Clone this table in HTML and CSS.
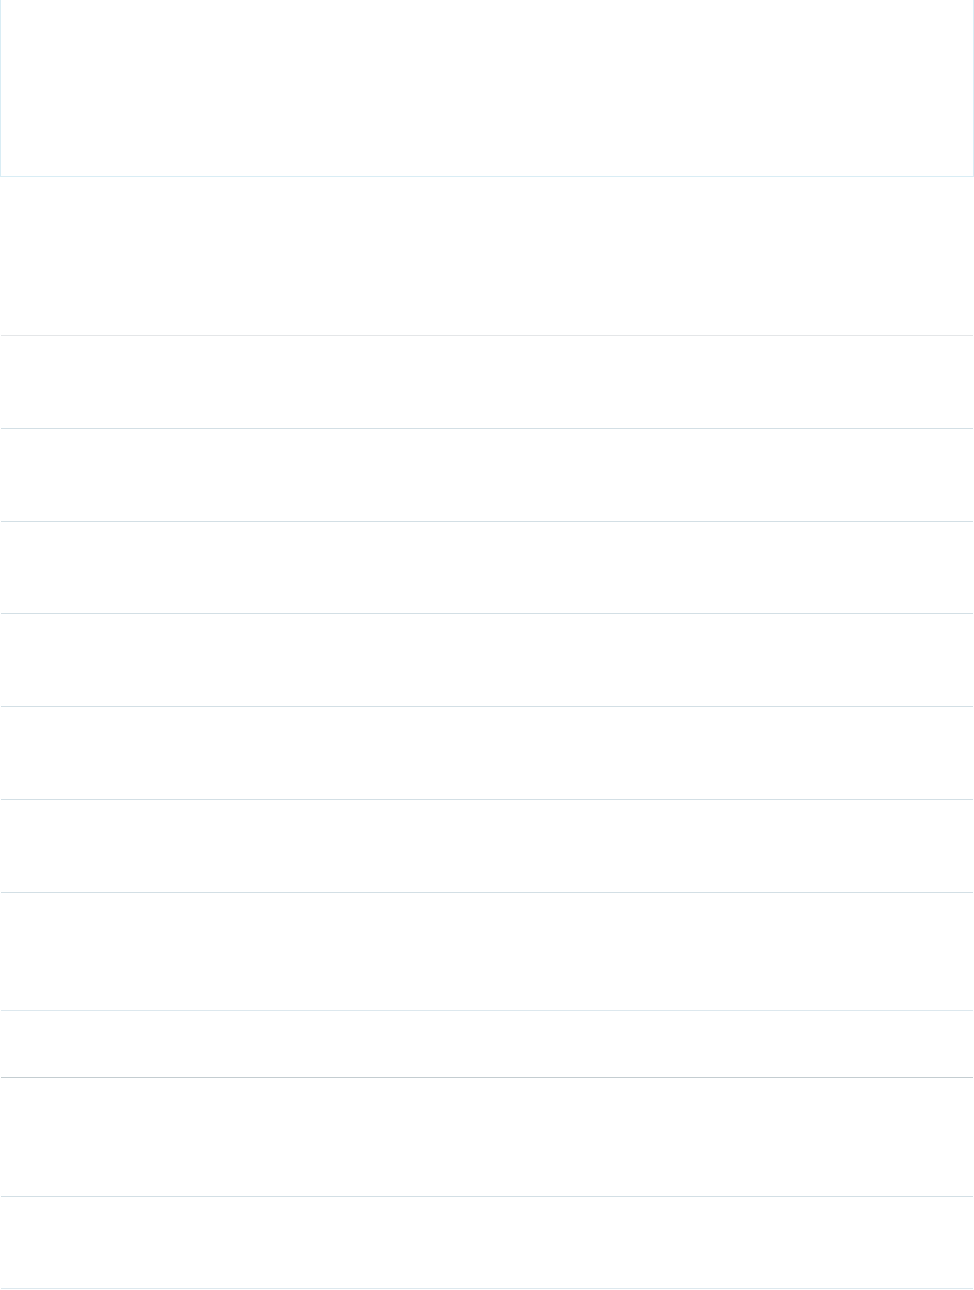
FILE: index.html
```html
<!DOCTYPE html>
<html>
<head>
    <meta charset="utf-8">
    <title>Records</title>
    <link rel="stylesheet" href="styles.css">
</head>
<body>
    <div class="banner"></div>
    <div class="content">
        <div class="head"></div>
        <div class="row"></div>
        <div class="row"></div>
        <div class="row short"></div>
        <div class="row"></div>
        <div class="row"></div>
        <div class="row"></div>
        <div class="row tall soft"></div>
        <div class="row small dark"></div>
        <div class="row taller"></div>
        <div class="row short soft"></div>
    </div>
</body>
</html>
```

FILE: styles.css
```css
html,
body {
    background: #fff;
    padding: 0;
    border: 0;
    margin: 0;
    font-family: "Liberation Sans", Arial, sans-serif;
}

.banner {
    height: 176px;
    border: 1px solid #d9edf5;
    border-top: 0;
}

.content {
    padding: 0 1px;
}

.head {
    height: 158px;
    border-bottom: 1px solid #e4e6e8;
}

.row {
    height: 92px;
    border-bottom: 1px solid #d3dfe5;
}

.row.short {
    height: 91px;
}

.row.tall {
    height: 117px;
}

.row.taller {
    height: 118px;
}

.row.small {
    height: 66px;
}

.row.soft {
    border-bottom-color: #dde8ee;
}

.row.dark {
    border-bottom-color: #c4cdd1;
}
```
